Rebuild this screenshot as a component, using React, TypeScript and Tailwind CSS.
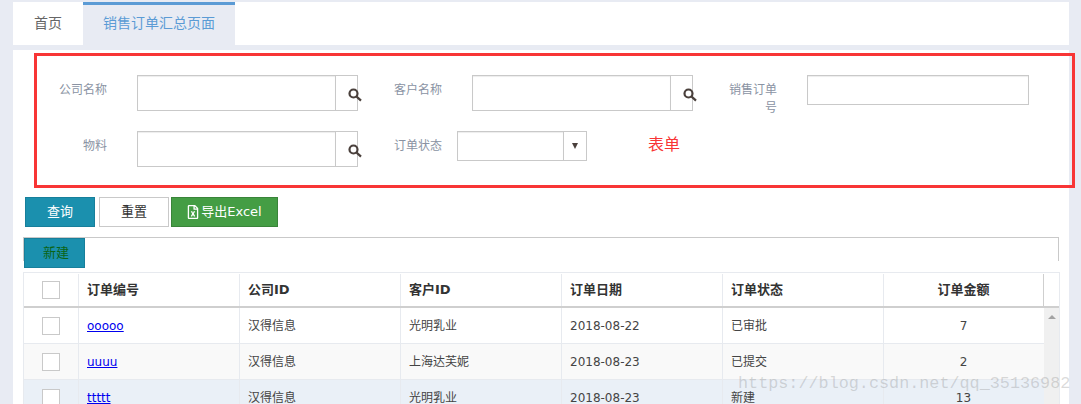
import React from "react";
import { FaRegFileExcel } from "react-icons/fa";

function SearchIcon() {
  return (
    <svg width="14" height="14" viewBox="0 0 14 14" className="block shrink-0">
      <circle cx="5.5" cy="5.5" r="4" fill="none" stroke="#4a403c" strokeWidth="2.2" />
      <path d="M8.6 8.6 L13 12.6" stroke="#4a403c" strokeWidth="2.2" />
    </svg>
  );
}

function Label({ children }: { children: React.ReactNode }) {
  return <div className="mt-[6px] w-[60px] shrink-0 text-right text-[12px] leading-[18px] text-[#8a93a3]">{children}</div>;
}

function Lookup() {
  return (
    <div className="ml-[30px] flex h-[36px] w-[221px] shrink-0 border border-[#c9c9c9]">
      <div className="flex-1 shadow-[inset_0_1px_1px_rgba(0,0,0,0.075)]" />
      <div className="flex w-[22px] shrink-0 items-center justify-start border-l border-[#c9c9c9] pl-[12px] pt-[3px]">
        <SearchIcon />
      </div>
    </div>
  );
}

const colClass = [
  "w-[55px] justify-center",
  "w-[161px] pl-[8px]",
  "w-[161px] pl-[8px]",
  "w-[161px] pl-[8px]",
  "w-[161px] pl-[8px]",
  "w-[161px] pl-[8px]",
  "w-[160px] justify-center",
];

function Check() {
  return <div className="h-[18px] w-[18px] border border-[#c9c9c9] bg-white" />;
}

function Cell({ i, children }: { i: number; children?: React.ReactNode }) {
  return <div className={`flex h-full shrink-0 items-center border-l border-[#e7eaef] ${colClass[i]}`}>{children}</div>;
}

const rows = [
  { id: "ooooo", co: "汉得信息", cu: "光明乳业", d: "2018-08-22", s: "已审批", a: "7", bg: "bg-white" },
  { id: "uuuu", co: "汉得信息", cu: "上海达芙妮", d: "2018-08-23", s: "已提交", a: "2", bg: "bg-[#f9f9f9]" },
  { id: "ttttt", co: "汉得信息", cu: "光明乳业", d: "2018-08-23", s: "新建", a: "13", bg: "bg-[#eaf0f7]" },
];

export default function App() {
  return (
    <div
      className="relative h-[404px] w-[1081px] overflow-hidden bg-[#e8ebf3] pl-[13px] pt-[2px] text-[12px] text-[#444]"
      style={{ fontFamily: '"DejaVu Sans", "Noto Sans CJK SC", sans-serif' }}
    >
      {/* tabs */}
      <div className="flex h-[43px] w-[1056px] bg-white text-[14px]">
        <div className="flex w-[70px] items-center justify-center text-[#666]">首页</div>
        <div className="flex w-[152px] items-center justify-center border-t-[3px] border-[#5b9bd5] bg-[#e8ebf3] pb-[3px] text-[#5b9bd5]">
          销售订单汇总页面
        </div>
      </div>

      {/* main panel */}
      <div className="mt-[5px] h-[354px] w-[1056px] bg-white pt-[25px]">
        <div className="flex h-[36px] pl-[34px]">
          <Label>公司名称</Label>
          <Lookup />
          <div className="ml-[24px] flex">
            <Label>客户名称</Label>
            <Lookup />
          </div>
          <div className="ml-[24px] flex">
            <Label>
              销售订单
              <br />号
            </Label>
            <div className="ml-[30px] h-[30px] w-[222px] shrink-0 border border-[#c9c9c9] shadow-[inset_0_1px_1px_rgba(0,0,0,0.075)]" />
          </div>
        </div>
        <div className="mt-[20px] flex h-[36px] pl-[34px]">
          <Label>物料</Label>
          <Lookup />
          <div className="ml-[24px] flex">
            <Label>订单状态</Label>
            <div className="ml-[15px] flex h-[30px] w-[130px] shrink-0 border border-[#c9c9c9]">
              <div className="flex-1 shadow-[inset_0_1px_1px_rgba(0,0,0,0.075)]" />
              <div className="flex w-[23px] items-center justify-center border-l border-[#c9c9c9]">
                <div className="h-0 w-0 border-x-[3.5px] border-t-[6px] border-x-transparent border-t-[#4a403c]" />
              </div>
            </div>
            <div className="ml-[61px] mt-[2px] text-[16px] leading-[24px] text-[#f83535]">表单</div>
          </div>
        </div>

        {/* action buttons */}
        <div className="mt-[30px] flex pl-[12px] text-[13px]">
          <button className="h-[30px] w-[70px] border border-[#177f9b] bg-[#1b90ae] text-white">查询</button>
          <button className="ml-[4px] h-[30px] w-[70px] border border-[#c9c9c9] bg-white text-[#333]">重置</button>
          <button className="ml-[2px] flex h-[30px] w-[107px] items-center justify-center gap-[2px] border border-[#398439] bg-[#449d44] text-white">
            <FaRegFileExcel className="h-[14px] w-[12px] shrink-0" />
            <span>导出Excel</span>
          </button>
        </div>

        {/* toolbar */}
        <div className="ml-[10px] mt-[10px] h-[24px] w-[1036px] border-x border-t border-[#c9c9c9]">
          <button className="h-[30px] w-[61px] border border-[#177f9b] bg-[#1b90ae] pl-[3px] text-[13px] text-[#0b6416]">新建</button>
        </div>

        {/* table */}
        <div className="ml-[10px] mt-[11px] w-[1037px] border-l border-r border-t border-[#e7eaef]">
          <div className="flex h-[35px] border-b-2 border-[#cfcfcf] pt-[1px] text-[13px] font-bold text-[#333]">
            <div className="-ml-px flex h-full">
              <Cell i={0}><Check /></Cell>
              <Cell i={1}>订单编号</Cell>
              <Cell i={2}>公司ID</Cell>
              <Cell i={3}>客户ID</Cell>
              <Cell i={4}>订单日期</Cell>
              <Cell i={5}>订单状态</Cell>
              <Cell i={6}>订单金额</Cell>
            </div>
            <div className="h-full flex-1 border-l border-[#cfcfcf]" />
          </div>
          <div className="flex">
            <div className="-ml-px w-[1021px] shrink-0">
              {rows.map((r) => (
                <div key={r.id} className={`flex h-[36px] border-b border-[#e7eaef] ${r.bg}`}>
                  <Cell i={0}><Check /></Cell>
                  <Cell i={1}><a href="#" className="text-[#0000ee] underline">{r.id}</a></Cell>
                  <Cell i={2}>{r.co}</Cell>
                  <Cell i={3}>{r.cu}</Cell>
                  <Cell i={4}>{r.d}</Cell>
                  <Cell i={5}>{r.s}</Cell>
                  <Cell i={6}>{r.a}</Cell>
                </div>
              ))}
            </div>
            <div className="flex flex-1 justify-center bg-[#f0f0f0] pt-[7px]">
              <div className="h-0 w-0 border-x-[4px] border-b-[4px] border-x-transparent border-b-[#a3a3a3]" />
            </div>
          </div>
        </div>
      </div>

      {/* annotation rectangle */}
      <div className="absolute left-[34px] top-[53px] h-[135px] w-[1041px] border-[3px] border-[#f83535]" />

      {/* watermark */}
      <div
        className="absolute left-[738px] top-[373px] whitespace-nowrap text-[16.8px] leading-[22px] text-[rgba(110,110,110,0.25)]"
        style={{ fontFamily: '"Liberation Mono", monospace' }}
      >
        https://blog.csdn.net/qq_35136982
      </div>
    </div>
  );
}
